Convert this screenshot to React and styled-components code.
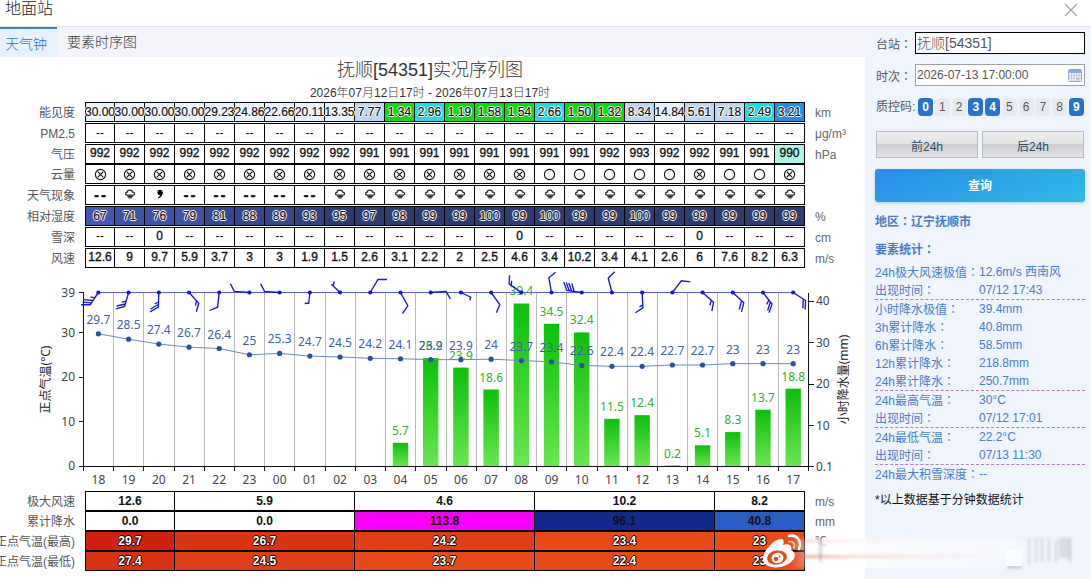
import React from "react";
import styled, { createGlobalStyle, css } from "styled-components";

const HOURS = [
  "18", "19", "20", "21", "22", "23", "00", "01", "02", "03", "04", "05",
  "06", "07", "08", "09", "10", "11", "12", "13", "14", "15", "16", "17",
];
const VISIBILITY = [
  "30.00", "30.00", "30.00", "30.00", "29.23", "24.86", "22.66", "20.11",
  "13.35", "7.77", "1.34", "2.96", "1.19", "1.58", "1.54", "2.66", "1.50",
  "1.32", "8.34", "14.84", "5.61", "7.18", "2.49", "3.21",
];
const PRESSURE = [
  992, 992, 992, 992, 992, 992, 992, 992, 992, 991, 991, 991,
  991, 991, 991, 991, 991, 992, 993, 992, 992, 991, 991, 990,
];
const HUMIDITY = [
  67, 71, 76, 79, 81, 88, 89, 93, 95, 97, 98, 99,
  99, 100, 99, 100, 99, 99, 100, 99, 99, 99, 99, 99,
];
const WIND = [
  12.6, 9, 9.7, 5.9, 3.7, 3, 3, 1.9, 1.5, 2.6, 3.1, 2.2,
  2, 2.5, 4.6, 3.4, 10.2, 3.4, 4.1, 2.6, 6, 7.6, 8.2, 6.3,
];
const TEMPS = [
  29.7, 28.5, 27.4, 26.7, 26.4, 25, 25.3, 24.7, 24.5, 24.2, 24.1, 23.9,
  23.9, 24, 23.7, 23.4, 22.6, 22.4, 22.4, 22.7, 22.7, 23, 23, 23,
];
const RAIN = [
  0, 0, 0, 0, 0, 0, 0, 0, 0, 0, 5.7, 26.2,
  23.9, 18.6, 39.4, 34.5, 32.4, 11.5, 12.4, 0.2, 5.1, 8.3, 13.7, 18.8,
];
// wind barbs, drawn from the station dot
const BARBS = [
  "M0 0L-8.3 12.2H-17.3M-6.7 10.3L-16 9.7M-5.3 8L-15 7.2M-3.5 5.2L-8 4.7",
  "M0 0L-4 14L-12.7 16.3M-3.2 11.5L-12 13.5M-2.3 8.7L-7 9.7",
  "M0 0L-.5 14.5L-8.7 19.3M-.5 12L-8.3 16.5M-.5 9.5L-4.3 11.5",
  "M0 0L9.7 10.8L7.3 19.3M7.5 8.5L6.3 13",
  "M0 0L-1.7 14.7L-9.7 18",
  "M0 0L-15 -1L-19 -8.7",
  "M0 0L-15 -1L-19 -8.7",
  "M0 0L-1.2 11.5M-1.1 10.5L-5.2 11",
  "M0 0L-8.7 -8.3M-7 -6.8L-5.7 -11",
  "M0 0L7.7 -13H16.7",
  "M0 0L7.3 13.3L2 21",
  "M0 0L15.3 -1L19.7 6.3",
  "M0 0L10.5 5M9.3 4.5V8",
  "M0 0L8.7 12L5.3 20.3",
  "M0 0L-12.3 -8.7L-11.7 -17.3M-10 -7L-9.7 -11.7",
  "M0 0L-2.7 -14.7L4 -20.3",
  "M0 0L-15 -2L-18 -10.5M-12.5 -1.6L-15.5 -10M-10 -1.2L-13 -9.5M-7.5 -1L-10 -9",
  "M0 0L-3.7 -14.3L2.7 -20.7",
  "M0 0L.7 15.3L-6.7 20.3M.6 12.7L-2.7 14.3",
  "M0 0L9 -11.7L18 -10.7",
  "M0 0L11 9.7L9.3 18.7M8.7 7.7L7.3 13",
  "M0 0L11 10.3L8.7 19.3M8.7 8.3L6.5 17",
  "M0 0L9 11.7L6 20.3M7.3 9.7L4.7 18M5.7 7.7L3.7 12",
  "M0 0L12.3 8L12 17M10 6.5L9.7 15.7",
];
const CLEAR_SKY = [15, 16, 17, 18, 19, 21, 22];

const SUMMARY = [
  {
    label: "极大风速",
    unit: "m/s",
    cells: [["12.6", "#fff"], ["5.9", "#fff"], ["4.6", "#fff"], ["10.2", "#fff"], ["8.2", "#fff"]],
  },
  {
    label: "累计降水",
    unit: "mm",
    cells: [["0.0", "#fff"], ["0.0", "#fff"], ["113.8", "#f800f8"], ["96.1", "#102a90"], ["40.8", "#295cc4"]],
  },
  {
    label: "正点气温(最高)",
    unit: "℃",
    light: true,
    cells: [["29.7", "#d0200e"], ["26.7", "#da3312"], ["24.2", "#e03f15"], ["23.4", "#e84b18"], ["23", "#e84b18"]],
  },
  {
    label: "正点气温(最低)",
    light: true,
    cells: [["27.4", "#da3312"], ["24.5", "#e03f15"], ["23.7", "#e84b18"], ["22.4", "#e84b18"], ["23", "#e84b18"]],
  },
];
const SPANS = [3, 6, 6, 6, 3];

const STATS = [
  ["24h极大风速极值", "12.6m/s 西南风"],
  ["出现时间", "07/12 17:43", true],
  ["小时降水极值", "39.4mm"],
  ["3h累计降水", "40.8mm"],
  ["6h累计降水", "58.5mm"],
  ["12h累计降水", "218.8mm"],
  ["24h累计降水", "250.7mm", true],
  ["24h最高气温", "30°C"],
  ["出现时间", "07/12 17:01", true],
  ["24h最低气温", "22.2°C"],
  ["出现时间", "07/13 11:30", true],
  ["24h最大积雪深度", "--"],
];

function visColor(v) {
  if (v < 2) return "#0bdc0b";
  if (v < 3) return "#14e1e8";
  if (v < 5) return "#1590ee";
  if (v < 10) return "#bcd7f5";
  return "#e8f2fd";
}

function humColor(v) {
  if (v < 70) return "#4359b5";
  if (v < 80) return "#3f52a5";
  if (v < 90) return "#37478f";
  if (v < 95) return "#334284";
  return "#2f3c72";
}

function SkyIcon({ clear }) {
  return (
    <svg width="13" height="13" viewBox="0 0 13 13" fill="none" stroke="#111">
      <circle cx="6.5" cy="6.5" r="5.1" strokeWidth="1.1" />
      {!clear && <path d="M3.7 3.7l5.6 5.6M9.3 3.7L3.7 9.3" strokeWidth="1.1" />}
    </svg>
  );
}

function RainIcon() {
  return (
    <svg width="12" height="12" viewBox="0 0 12 12" fill="none" stroke="#222">
      <path
        d="M3.2 7.2C1 7.1 1 4.5 3 4.4C3.3 1.6 8 1.4 8.6 4.2C11 4 11.3 7 9 7.2Z"
        strokeWidth="1.2"
      />
      <path d="M3.4 8.6H8.8M4.4 10H7.8" strokeWidth="1.1" />
    </svg>
  );
}

function DrizzleIcon() {
  return (
    <svg width="8" height="10" viewBox="0 0 8 10">
      <circle cx="4" cy="3.4" r="2.6" fill="#000" />
      <path d="M6 3C6.2 6 4.6 7.8 2.2 8.8" fill="none" stroke="#000" strokeWidth="1.3" />
    </svg>
  );
}

function weather(i) {
  if (i === 1 || i > 7) return <RainIcon />;
  if (i === 2) return <DrizzleIcon />;
  return <WideDash>--</WideDash>;
}

function HourRow({ label, unit, gap = 1, lift = 0, glow, plain, colors, children }) {
  return (
    <Row $gap={gap}>
      <RowLabel>{label}</RowLabel>
      <Cells>
        {children.map((value, i) => (
          <Cell key={i} $bg={colors && colors[i]} $lift={lift} $glow={glow} $plain={plain || value === "--"}>
            <Value>{value}</Value>
          </Cell>
        ))}
      </Cells>
      <Unit>{unit}</Unit>
    </Row>
  );
}

function Chart() {
  const step = 725 / 24;
  const cx = (i) => 83.3 + step * (i + 0.5);
  const ty = (t) => 466 - t * 4.45;
  const ry = (r) => 466 - (r - 0.1) * 4.135;
  return (
    <ChartSvg width="865" height="223" viewBox="0 268 865 223">
      <defs>
        <linearGradient id="rain" x1="0" y1="0" x2="0" y2="1">
          <stop offset="0" stopColor="#0bc00b" />
          <stop offset="1" stopColor="#6ae650" />
        </linearGradient>
      </defs>
      <g stroke="#b9b9bd" shapeRendering="crispEdges">
        {HOURS.slice(1).map((h, i) => (
          <path key={h} d={`M${83.5 + step * (i + 1)} 292.5V466`} />
        ))}
      </g>
      <g fill="url(#rain)">
        {RAIN.map((r, i) => r > 0 && (
          <rect key={i} x={cx(i) - 7.7} y={ry(r)} width="15.4" height={466 - ry(r)} />
        ))}
      </g>
      <g stroke="#111" fill="none" shapeRendering="crispEdges">
        <path d="M83.5 292.5V466.5H808.5V292.5" />
        {[292.5, 332.5, 377.5, 421.5, 466.5].map((y) => (
          <path key={y} d={`M78.5 ${y}H83.5`} />
        ))}
        {[301.5, 342.5, 384.5, 425.5, 466.5].map((y) => (
          <path key={y} d={`M808.5 ${y}H813.5`} />
        ))}
        {[...HOURS, "end"].map((h, i) => (
          <path key={h} d={`M${83.5 + step * i} 466.5V471`} />
        ))}
      </g>
      <g fill="#2eb02e" textAnchor="middle">
        {RAIN.map((r, i) => r > 0 && (
          <text key={i} x={cx(i)} y={ry(r) - 8}>{r}</text>
        ))}
      </g>
      <path d={`M${cx(0)} 292.5H${cx(23)}`} stroke="#5a64d8" />
      <g fill="none" stroke="#1616e0" strokeWidth="1.35">
        {BARBS.map((d, i) => (
          <path key={i} d={d} transform={`translate(${cx(i)} 292.5)`} />
        ))}
      </g>
      <g fill="#1010e8">
        {BARBS.map((d, i) => (
          <circle key={i} cx={cx(i)} cy="292.5" r="2.1" />
        ))}
      </g>
      <polyline
        points={TEMPS.map((t, i) => `${cx(i)},${ty(t)}`).join(" ")}
        fill="none"
        stroke="#6888c4"
        strokeWidth="1"
      />
      <g fill="#2b50a0">
        {TEMPS.map((t, i) => (
          <circle key={i} cx={cx(i)} cy={ty(t)} r="2.6" />
        ))}
      </g>
      <g fill="#3d5fa8" textAnchor="middle">
        {TEMPS.map((t, i) => (
          <text key={i} x={cx(i)} y={ty(t) - 10}>{t}</text>
        ))}
      </g>
      <g fill="#444" textAnchor="middle">
        {HOURS.map((h, i) => (
          <text key={h} x={cx(i)} y="484">{h}</text>
        ))}
      </g>
      <g fill="#444" textAnchor="end">
        {[["39", 296.5], ["30", 336.5], ["20", 381], ["10", 425.5], ["0", 470]].map(([t, y]) => (
          <text key={t} x="75" y={y}>{t}</text>
        ))}
      </g>
      <g fill="#444">
        {[["40", 304.5], ["30", 346.5], ["20", 388], ["10", 429.5], ["0.1", 470.5]].map(([t, y]) => (
          <text key={t} x="816" y={y}>{t}</text>
        ))}
      </g>
      <g fill="#222" textAnchor="middle">
        <text transform="translate(50 379.5) rotate(-90)">正点气温(°C)</text>
        <text transform="translate(848 379.5) rotate(-90)">小时降水量(mm)</text>
      </g>
    </ChartSvg>
  );
}

function Watermark() {
  return (
    <Mark width="331" height="44" viewBox="760 530 331 44">
      <defs>
        <linearGradient id="fade" x1="0" x2="1">
          <stop offset="0" stopColor="#fff" stopOpacity="0" />
          <stop offset="0.12" stopColor="#fff" stopOpacity="0.75" />
          <stop offset="1" stopColor="#fff" stopOpacity="0.15" />
        </linearGradient>
        <linearGradient id="streak" x1="0" x2="1">
          <stop offset="0" stopColor="#e8532a" stopOpacity="0.75" />
          <stop offset="0.25" stopColor="#f3a892" stopOpacity="0.5" />
          <stop offset="1" stopColor="#f6d5d2" stopOpacity="0" />
        </linearGradient>
        <filter id="soft" x="-20%" y="-50%" width="140%" height="200%">
          <feGaussianBlur stdDeviation="1.6" />
        </filter>
      </defs>
      <g filter="url(#soft)">
        <rect x="790" y="539" width="290" height="29" fill="url(#fade)" />
        <rect x="798" y="540" width="170" height="2" fill="url(#streak)" opacity="0.5" />
        <rect x="790" y="555" width="230" height="3" fill="url(#streak)" />
        <rect x="819" y="540" width="3" height="22" fill="#999" opacity="0.45" />
        <path d="M1029 538V565M1036 538V562M1042 538V562M1049 538V562M1056 540V562M1070 538V563" stroke="#b4b6be" strokeWidth="2.5" opacity="0.5" />
        <rect x="1059" y="538" width="12" height="20" fill="#bfc1c9" opacity="0.5" />
        <rect x="1007" y="566" width="15" height="2" fill="#888" opacity="0.7" />
      </g>
      <rect x="1006" y="550" width="15" height="16" fill="#fbfcff" />
      <g>
        <path
          d="M782 539C785 540 783 545 783 545C788 543 793 545 791 550C796 552 796 557 792 561C785 569 767 570 763 561C761 553 774 538 782 539Z"
          fill="#fff"
        />
        <ellipse cx="777" cy="557.5" rx="10" ry="7" fill="#e84b18" transform="rotate(-8 777 557.5)" />
        <ellipse cx="777.5" cy="558" rx="6" ry="5.2" fill="#fff" transform="rotate(-8 777 558)" />
        <circle cx="776" cy="559" r="2.2" fill="#e84b18" />
        <circle cx="779.5" cy="556.5" r="0.9" fill="#e84b18" />
        <path d="M789 536C797 534 802 541 799 549" fill="none" stroke="#fff" strokeWidth="2.6" strokeLinecap="round" />
        <path d="M789 541.5C793 541 795.5 544 794 547.5" fill="none" stroke="#fff" strokeWidth="2" strokeLinecap="round" opacity="0.6" />
      </g>
    </Mark>
  );
}

function CalendarIcon() {
  return (
    <svg width="14" height="13" viewBox="0 0 14 13">
      <rect x="0.5" y="0.5" width="13" height="12" rx="1" fill="#eef2fa" stroke="#8fa6cf" />
      <rect x="1" y="1" width="12" height="3" fill="#8eaadb" />
      <path d="M3.5 4V12M6 4V12M8.5 4V12M11 4V12M1 6.5H13M1 9H13" stroke="#b9c6e0" strokeWidth="0.8" />
      <rect x="9" y="9.2" width="2" height="2" fill="#dcae9a" />
    </svg>
  );
}

function App() {
  return (
    <Page>
      <GlobalStyle />
      <Header>
        <h1>地面站</h1>
        <svg width="14" height="14" viewBox="0 0 14 14" stroke="#999" strokeWidth="1.2">
          <path d="M1.2 1.2L12.8 12.8M12.8 1.2L1.2 12.8" />
        </svg>
      </Header>
      <Body>
        <Main>
          <Tabs>
            <Tab $active>天气钟</Tab>
            <Tab>要素时序图</Tab>
          </Tabs>
          <Title>抚顺[54351]实况序列图</Title>
          <Subtitle>2026年07月12日17时 - 2026年07月13日17时</Subtitle>
          <HourRow label="能见度" unit="km" glow gap={0} colors={VISIBILITY.map(visColor)}>
            {VISIBILITY}
          </HourRow>
          <HourRow label="PM2.5" unit="μg/m³">
            {HOURS.map(() => "--")}
          </HourRow>
          <HourRow label="气压" unit="hPa" lift={2} colors={PRESSURE.map((p) => (p < 991 ? "#aef5e8" : "#fff"))}>
            {PRESSURE}
          </HourRow>
          <HourRow label="云量" gap={0}>
            {HOURS.map((h, i) => <SkyIcon key={h} clear={CLEAR_SKY.includes(i)} />)}
          </HourRow>
          <HourRow label="天气现象" lift={2}>
            {HOURS.map((h, i) => weather(i))}
          </HourRow>
          <HourRow label="相对湿度" unit="%" glow plain colors={HUMIDITY.map(humColor)}>
            {HUMIDITY}
          </HourRow>
          <HourRow label="雪深" unit="cm" lift={2}>
            {HOURS.map((h, i) => ([2, 14, 20].includes(i) ? "0" : "--"))}
          </HourRow>
          <HourRow label="风速" unit="m/s" lift={2}>
            {WIND}
          </HourRow>
          <Chart />
          {SUMMARY.map((row) => (
            <Row key={row.label} $gap={0}>
              <RowLabel>{row.label}</RowLabel>
              <Cells>
                {row.cells.map(([text, color], i) => (
                  <SummaryCell key={i} $span={SPANS[i]} $bg={color} $light={row.light}>
                    {text}
                  </SummaryCell>
                ))}
              </Cells>
              <Unit>{row.unit}</Unit>
            </Row>
          ))}
        </Main>
        <Side>
          <Field>
            <FieldLabel>台站<Colon>：</Colon></FieldLabel>
            <Input $strong>抚顺[54351]</Input>
          </Field>
          <Field>
            <FieldLabel>时次<Colon>：</Colon></FieldLabel>
            <Input>
              2026-07-13 17:00:00
              <CalendarIcon />
            </Input>
          </Field>
          <CodeField>
            <FieldLabel>质控码:</FieldLabel>
            <Codes>
              {[0, 1, 2, 3, 4, 5, 6, 7, 8, 9].map((n) => (
                <Code key={n} $on={[0, 3, 4, 9].includes(n)}>{n}</Code>
              ))}
            </Codes>
          </CodeField>
          <Shift>
            <ShiftButton>前24h</ShiftButton>
            <ShiftButton>后24h</ShiftButton>
          </Shift>
          <Query>查询</Query>
          <Strong>地区<Colon>：</Colon>辽宁抚顺市</Strong>
          <Strong>要素统计<Colon>：</Colon></Strong>
          <Stats>
            {STATS.map(([name, value, line], i) => (
              <Stat key={i} $line={line}>
                <span>{name}<Colon>：</Colon></span>
                <span>{value}</span>
              </Stat>
            ))}
          </Stats>
          <Note>*以上数据基于分钟数据统计</Note>
        </Side>
      </Body>
      <Watermark />
    </Page>
  );
}

const GlobalStyle = createGlobalStyle`
  * {
    box-sizing: border-box;
  }
  body {
    margin: 0;
    overflow: hidden;
    background: #fff;
  }
`;
const Page = styled.div`
  position: relative;
  width: 1091px;
  height: 579px;
  overflow: hidden;
  font-family: "Liberation Sans", "Noto Sans CJK SC", sans-serif;
  font-size: 12px;
  color: #555;
`;
const Header = styled.header`
  display: flex;
  justify-content: space-between;
  height: 27px;
  padding: 3px 13px 0 5px;
  border-bottom: 1px solid #dfe1e8;
  h1 {
    margin: -5px 0 0;
    font-size: 16px;
    line-height: 22px;
    font-weight: 300;
    color: #222;
  }
`;
const Body = styled.div`
  display: flex;
  height: 552px;
`;
const Main = styled.main`
  width: 865px;
  overflow: hidden;
`;
const Tabs = styled.nav`
  display: flex;
  height: 30px;
  background: #f4f5fa;
`;
const Tab = styled.div`
  padding: 0 10px;
  font-size: 14px;
  font-weight: 300;
  line-height: 30px;
  color: #333;
  ${(p) =>
    p.$active &&
    css`
      width: 57px;
      padding: 0 5px;
      line-height: 30px;
      color: #1f74cc;
      background: #e7f2fd;
      border-top: 2px solid #4085cc;
    `}
`;
const Title = styled.h2`
  margin: 0;
  padding-right: 5px;
  font-size: 18px;
  font-weight: 300;
  line-height: 26px;
  text-align: center;
  color: #333;
`;
const Subtitle = styled.p`
  margin: 0;
  padding-right: 5px;
  height: 19px;
  line-height: 20px;
  font-weight: 300;
  text-align: center;
  color: #333;
`;
const Row = styled.div`
  display: flex;
  height: 20px;
  margin-top: ${(p) => p.$gap}px;
`;
const RowLabel = styled.div`
  display: flex;
  flex: 0 0 85px;
  min-width: 0;
  justify-content: flex-end;
  padding-right: 10px;
  line-height: 22px;
  white-space: nowrap;
`;
const Cells = styled.div`
  display: flex;
  flex: 0 0 720px;
  border: 1px solid #000;
  border-width: 1px 0 1px 1px;
`;
const Cell = styled.div`
  display: flex;
  align-items: center;
  justify-content: center;
  flex: 0 0 30px;
  min-width: 0;
  padding-bottom: ${(p) => p.$lift}px;
  border-right: 1px solid #000;
  background: ${(p) => p.$bg || "#fff"};
  color: #111;
  -webkit-text-stroke: ${(p) => (p.$plain ? 0 : 0.35)}px #111;
  &:first-child {
    flex-basis: 29px;
  }
  ${(p) =>
    p.$glow &&
    css`
      text-shadow: 1px 0 #fff, -1px 0 #fff, 0 1px #fff, 0 -1px #fff, 0 0 2px #fff;
      -webkit-text-stroke: 0.2px #111;
    `}
`;
/* stacked above the neighbouring cell, long values run over the border */
const Value = styled.span`
  position: relative;
  z-index: 1;
  display: flex;
`;
const SummaryCell = styled(Cell)`
  flex: 0 0 ${(p) => p.$span * 30}px;
  font-weight: 700;
  -webkit-text-stroke: 0;
  &:first-child {
    flex-basis: ${(p) => p.$span * 30 - 1}px;
  }
  ${(p) =>
    p.$light &&
    css`
      color: #fff;
      text-shadow: 1px 0 #000, -1px 0 #000, 0 1px #000, 0 -1px #000;
    `}
`;
const WideDash = styled.span`
  font-size: 15px;
  font-weight: 700;
  letter-spacing: 2px;
  margin-right: -2px;
`;
const Unit = styled.div`
  padding-left: 10px;
  line-height: 23px;
  color: #666;
`;
const ChartSvg = styled.svg`
  display: block;
  font-family: "Noto Sans", "Noto Sans CJK SC", sans-serif;
  font-size: 12px;
`;
const Side = styled.aside`
  width: 226px;
  padding: 5px 6px 0 10px;
  background: #f0f4fc;
`;
const Field = styled.div`
  display: flex;
  height: 22px;
  margin-bottom: 10px;
`;
const FieldLabel = styled.label`
  flex: 0 0 40px;
  padding-left: 1px;
  line-height: 23px;
  white-space: nowrap;
`;
/* centred full-width colon */
const Colon = styled.span`
  font-family: "Noto Sans CJK TC", sans-serif;
`;
const Input = styled.div`
  display: flex;
  flex: 1;
  align-items: center;
  justify-content: space-between;
  padding: 0 2px 0 1px;
  background: #fff;
  border: 1px solid ${(p) => (p.$strong ? "#000" : "#a0a0a0")};
  font-size: ${(p) => (p.$strong ? 14 : 12)}px;
  line-height: 18px;
  font-weight: 300;
  color: #555;
`;
const CodeField = styled(Field)`
  height: 18px;
  margin-top: 12px;
  ${FieldLabel} {
    flex-basis: 43px;
    line-height: 18px;
  }
`;
const Codes = styled.div`
  display: flex;
  flex: 1;
  justify-content: space-between;
  padding-right: 1px;
`;
const Code = styled.div`
  width: 15px;
  height: 18px;
  border-radius: 4px;
  line-height: 18px;
  text-align: center;
  color: ${(p) => (p.$on ? "#fff" : "#555")};
  font-weight: ${(p) => (p.$on ? 700 : 400)};
  background: ${(p) => (p.$on ? "#2674cf" : "#e8eaf0")};
`;
const Shift = styled.div`
  display: flex;
  gap: 4px;
  margin: 15px 1px 0;
`;
const ShiftButton = styled.button`
  flex: 1;
  height: 27px;
  padding: 2px 0 0;
  border: 1px solid #b9bcc2;
  background: linear-gradient(#eee 0%, #e2e2e3 49%, #cdcdcf 50%, #e4e4e6 100%);
  font: inherit;
  color: #2d4a66;
`;
const Query = styled.button`
  display: block;
  width: 100%;
  height: 33px;
  margin: 11px 0 10px;
  padding: 0 0 2px;
  border: 0;
  border-radius: 3px;
  background: linear-gradient(160deg, #2c8ceb, #2cbbe2);
  box-shadow: 0 1px 3px rgba(44, 140, 235, 0.35);
  font: inherit;
  font-weight: 700;
  color: #fff;
`;
const Strong = styled.div`
  height: 18px;
  margin-bottom: 10px;
  line-height: 18px;
  font-weight: 700;
  color: #4a78c6;
`;
const Stats = styled.div`
  margin-top: -5px;
`;
const Stat = styled.div`
  display: grid;
  grid-template-columns: 104px 1fr;
  height: ${(p) => (p.$line ? 19 : 18)}px;
  line-height: 18px;
  white-space: nowrap;
  color: #4a7cc8;
  border-bottom: ${(p) => (p.$line ? "1px dashed #a97fc0" : "0")};
`;
const Note = styled.div`
  margin-top: 8px;
  line-height: 18px;
  color: #111;
`;
const Mark = styled.svg`
  position: absolute;
  left: 760px;
  top: 530px;
`;

export default App;
